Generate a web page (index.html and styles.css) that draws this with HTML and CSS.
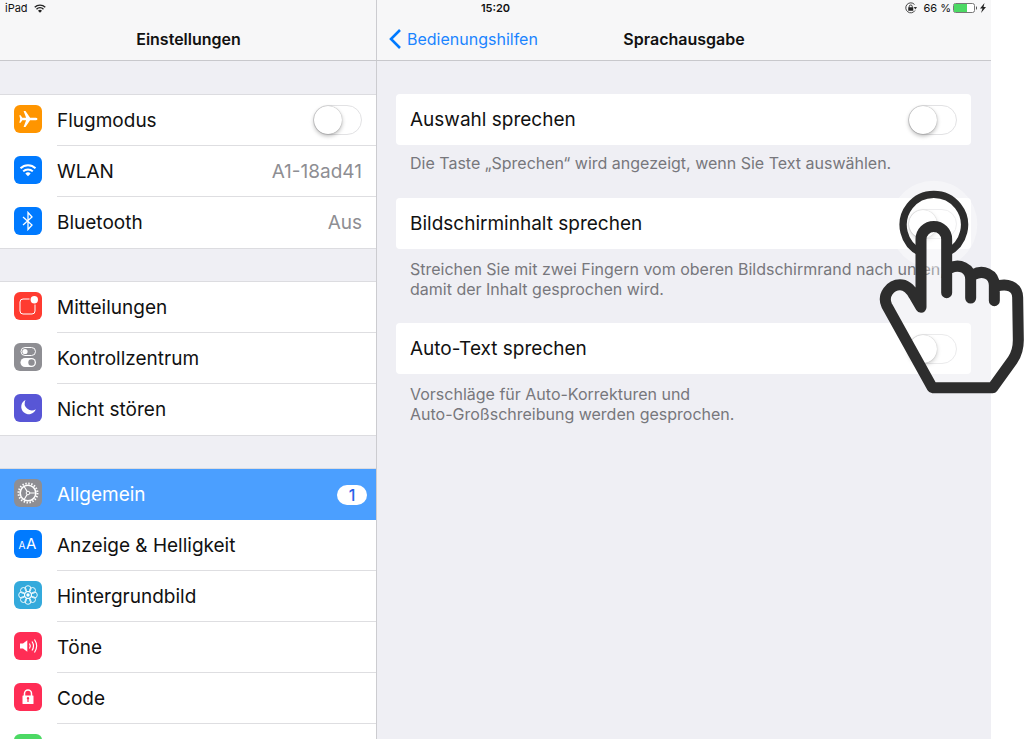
FILE: index.html
```html
<!DOCTYPE html>
<html lang="de">
<head>
<meta charset="utf-8">
<title>Einstellungen – Sprachausgabe</title>
<meta name="viewport" content="width=device-width, initial-scale=1">
<link rel="stylesheet" href="styles.css">
</head>
<body>
<div class="stage">
  <div class="tablet">
    <header class="bar">
      <div class="status">
        <span class="status-left">iPad
          <svg class="status-wifi" viewBox="0 0 24 18" aria-hidden="true"><path d="M1.500 6.500a15 15 0 0 1 21 0M5 10.500a10 10 0 0 1 14 0" fill="none" stroke="#222" stroke-width="2.800"/><path d="M8 13.500a6 6 0 0 1 8 0l-4 4z" fill="#222"/></svg>
        </span>
        <span class="status-time">15:20</span>
        <span class="status-right">
          <svg class="status-lock" viewBox="0 0 24 24" aria-hidden="true"><path d="M19 5A10 10 0 1 0 20 17" fill="none" stroke="#333" stroke-width="1.800"/><path d="M17.500 10h6.500l-3.200 5z" fill="#333"/><rect x="6.500" y="10.500" width="10" height="7" fill="#222"/><path d="M8.500 11V9a3 3 0 0 1 6 0v2" fill="none" stroke="#222" stroke-width="1.800"/></svg>
          <span>66 %</span>
          <svg class="status-battery" viewBox="0 0 25 10" aria-hidden="true"><rect x=".5" y=".5" width="21" height="9" rx="2" fill="#fff" stroke="#777"/><path d="M1 1h13v8H1z" fill="#4cd964"/><path d="M23 3q2 2 0 4z" fill="#444"/></svg>
          <svg class="status-bolt" viewBox="0 0 6 10" aria-hidden="true"><path d="M4.500 0 0 5.500h2.500L1 10l5-6H3.500z" fill="#222"/></svg>
        </span>
      </div>
      <div class="titles">
        <h1 class="title">Einstellungen</h1>
        <div class="detail-title">
          <a class="back" href="#bedienungshilfen"><svg class="chevron" viewBox="0 0 12 20" aria-hidden="true"><path d="M11 1 2 10l9 9" fill="none" stroke="#007aff" stroke-width="2.600"/></svg>Bedienungshilfen</a>
          <h2 class="title">Sprachausgabe</h2>
        </div>
      </div>
    </header>

    <nav class="sidebar">
      <ul class="group">
        <li class="row">
          <svg class="icon orange" viewBox="0 0 28 28" aria-hidden="true"><path d="M23.500 14c0-.8-1.200-1.300-2.400-1.300h-5L11.500 6H9.600l2.500 6.700H8.300L6.600 10.300H5.300l.9 3.700-.9 3.700h1.300l1.700-2.400h3.800L9.600 22h1.900l4.600-6.700h5c1.200 0 2.400-.5 2.400-1.300z" fill="#fff"/></svg>
          <div class="body"><label for="flug">Flugmodus</label><input class="switch" type="checkbox" id="flug"></div>
        </li>
        <li><a class="row" href="#wlan">
          <svg class="icon blue" viewBox="0 0 28 28" aria-hidden="true"><path d="M6.500 12.300a10.600 10.600 0 0 1 15 0M9.200 15.400a6.800 6.800 0 0 1 9.600 0" fill="none" stroke="#fff" stroke-width="2"/><path d="M11.300 17.400a4 4 0 0 1 5.400 0L14 20.300z" fill="#fff"/></svg>
          <span class="body">WLAN<span class="value">A1-18ad41</span></span></a></li>
        <li><a class="row" href="#bluetooth">
          <svg class="icon blue" viewBox="0 0 28 28" aria-hidden="true"><path d="m9 10 9 8-4 4.500v-17l4 4.500-9 8" fill="none" stroke="#fff" stroke-width="1.300"/></svg>
          <span class="body">Bluetooth<span class="value">Aus</span></span></a></li>
      </ul>

      <ul class="group">
        <li><a class="row" href="#mitteilungen">
          <svg class="icon red" viewBox="0 0 28 28" aria-hidden="true"><path d="M15.500 7H9a3 3 0 0 0-3 3v9a3 3 0 0 0 3 3h9a3 3 0 0 0 3-3v-6.500" fill="none" stroke="#fff" stroke-width="1"/><circle cx="20.300" cy="7.800" r="3.700" fill="#fff"/></svg>
          <span class="body">Mitteilungen</span></a></li>
        <li><a class="row" href="#kontrollzentrum">
          <svg class="icon gray" viewBox="0 0 28 28" aria-hidden="true"><rect x="7" y="4.500" width="14.500" height="8" rx="4" fill="none" stroke="#fff"/><circle cx="11" cy="8.500" r="2.600" fill="#fff"/><rect x="6.500" y="15" width="15.500" height="9" rx="4.500" fill="#fff"/><circle cx="17.500" cy="19.500" r="3.200" fill="#8e8e93"/></svg>
          <span class="body">Kontrollzentrum</span></a></li>
        <li><a class="row" href="#nicht-stoeren">
          <svg class="icon purple" viewBox="0 0 28 28" aria-hidden="true"><path d="M11.500 6a7.500 7.500 0 1 0 10.300 9.300A7.200 7.200 0 0 1 11.500 6z" fill="#fff"/></svg>
          <span class="body">Nicht stören</span></a></li>
      </ul>

      <ul class="group">
        <li><a class="row selected" href="#allgemein" aria-current="page">
          <svg class="icon gray" viewBox="0 0 28 28" aria-hidden="true"><g fill="none" stroke="#fff"><circle cx="14" cy="14" r="9.500" stroke-width="2" stroke-dasharray="1.400 1.584"/><circle cx="14" cy="14" r="7.800" stroke-width="1.600"/><circle cx="14" cy="14" r="1.800"/><path d="M15.800 14H22M13.100 12.400 10 7.200M13.100 15.600 10 20.800" stroke-width="1.100"/></g></svg>
          <span class="body">Allgemein<span class="badge">1</span></span></a></li>
        <li><a class="row" href="#anzeige">
          <svg class="icon blue" viewBox="0 0 28 28" aria-hidden="true"><g font-family="Inter, sans-serif" fill="#fff"><text x="4.500" y="19" font-size="10">A</text><text x="12" y="19" font-size="15">A</text></g></svg>
          <span class="body">Anzeige &amp; Helligkeit</span></a></li>
        <li><a class="row" href="#hintergrundbild">
          <svg class="icon cyan" viewBox="0 0 28 28" aria-hidden="true"><g fill="none" stroke="#fff" stroke-width=".9"><circle cx="14" cy="7.700" r="3"/><circle cx="18.500" cy="9.500" r="3"/><circle cx="20.300" cy="14" r="3"/><circle cx="18.500" cy="18.500" r="3"/><circle cx="14" cy="20.300" r="3"/><circle cx="9.500" cy="18.500" r="3"/><circle cx="7.700" cy="14" r="3"/><circle cx="9.500" cy="9.500" r="3"/><circle cx="14" cy="14" r="3.500"/></g><circle cx="14" cy="14" r="1.700" fill="#fff"/></svg>
          <span class="body">Hintergrundbild</span></a></li>
        <li><a class="row" href="#toene">
          <svg class="icon pink" viewBox="0 0 28 28" aria-hidden="true"><path d="M6 11.500h3l4.300-3.300v11.600L9 16.500H6z" fill="#fff"/><path d="M15.500 11.500q1.600 2.500 0 5M18 9.500q3 4.500 0 9M20.500 7.500q4.300 6.500 0 13" fill="none" stroke="#fff" stroke-width="1.200"/></svg>
          <span class="body">Töne</span></a></li>
        <li><a class="row" href="#code">
          <svg class="icon pink" viewBox="0 0 28 28" aria-hidden="true"><path d="M10.500 13V10.500a3.500 3.500 0 0 1 7 0V13" fill="none" stroke="#fff" stroke-width="1.500"/><rect x="8.500" y="12.500" width="11" height="8.500" rx=".5" fill="#fff"/><path d="M14 14a1.300 1.300 0 0 1 .6 2.400V19h-1.200v-2.600A1.300 1.300 0 0 1 14 14z" fill="#ff2d55"/></svg>
          <span class="body">Code</span></a></li>
        <li><a class="row" href="#batterie" aria-label="Batterie">
          <svg class="icon green" viewBox="0 0 28 28" aria-hidden="true"><rect x="5" y="10" width="16" height="8" rx="1" fill="#fff"/></svg>
          <span class="body"></span></a></li>
      </ul>
    </nav>

    <main class="detail">
      <div class="card"><label for="auswahl">Auswahl sprechen</label><input class="switch" type="checkbox" id="auswahl"></div>
      <p class="hint">Die Taste „Sprechen“ wird angezeigt, wenn Sie Text auswählen.</p>
      <div class="card"><label for="inhalt">Bildschirminhalt sprechen</label><input class="switch" type="checkbox" id="inhalt"></div>
      <p class="hint long">Streichen Sie mit zwei Fingern vom oberen Bildschirmrand nach unten,<br>damit der Inhalt gesprochen wird.</p>
      <div class="card"><label for="autotext">Auto-Text sprechen</label><input class="switch" type="checkbox" id="autotext"></div>
      <p class="hint long">Vorschläge für Auto-Korrekturen und<br>Auto-Großschreibung werden gesprochen.</p>
    </main>
  </div>

  <svg class="hand" viewBox="0 0 462 660" aria-hidden="true">
    <circle cx="191" cy="133" r="131" fill="#fff" fill-opacity=".4"/>
    <path d="M153 178a38.500 38.500 0 0 1 77 0v92C262 245 298 262 302 290 336 264 370 280 373 318 410 304 442 318 443 352L445 480Q445 515 430 540L368 623H190L50 376C32 345 62 314 90 314Q115 314 132 346L153 382z" fill="#fff" fill-opacity=".3"/>
    <g fill="none" stroke="#2d2d2d" stroke-linecap="round" stroke-linejoin="round">
      <path d="M153 218.600a92 92 0 1 1 77 0" stroke-width="22" stroke-linecap="butt"/>
      <path stroke-width="33" d="M230 338V178a38.500 38.500 0 0 0-77 0V382L132 346Q115 314 90 314C62 314 36 345 50 376L187 623H368L428 540Q445 515 445 480L443 352C442 318 410 308 376 320M240 264C268 250 302 264 302 298V354M310 284C338 268 373 282 373 316V362"/>
    </g>
  </svg>
</div>
</body>
</html>
```
FILE: styles.css
```css
* { box-sizing: border-box; }

body {
  margin: 0;
  background: #fff;
  color: #111;
  font-family: Inter, "Liberation Sans", sans-serif;
  font-size: 19px;
}

h1, h2, p, ul { margin: 0; padding: 0; }
ul { list-style: none; }
a { color: inherit; text-decoration: none; }
svg { display: block; flex: none; }

.stage {
  position: relative;
  height: 100vh;
  padding-right: 33px;
  overflow: hidden;
}

.tablet {
  display: grid;
  grid-template-columns: 377px 1fr;
  grid-template-rows: auto 1fr;
  height: 100%;
  background: #efeff4;
}

/* Status and title bar */
.bar {
  grid-column: 1 / -1;
  background: linear-gradient(to right, #f7f7f8 376px, #ccccd0 376px, #ccccd0 377px, #f7f7f8 377px);
  border-bottom: 1px solid #c8c8cc;
}
.status {
  display: grid;
  grid-template-columns: 1fr auto 1fr;
  align-items: center;
  height: 16px;
  padding: 0 5px;
  font-size: 11px;
  line-height: 16px;
}
.status-left, .status-right { display: flex; align-items: center; gap: 6px; }
.status-right { justify-content: flex-end; gap: 2px; font-size: 11px; }
.status-time { font-weight: 600; }
.status-wifi { width: 12px; height: 9px; }
.status-lock { width: 12px; height: 12px; margin-right: 4px; }
.status-battery { width: 25px; height: 10px; }
.status-bolt { width: 6px; height: 10px; }

.titles {
  display: grid;
  grid-template-columns: 377px 1fr;
  align-items: center;
  height: 44px;
  padding-top: 2px;
  font-size: 16px;
}
.title { font-size: 16px; font-weight: 600; text-align: center; }
.detail-title {
  display: grid;
  grid-template-columns: 1fr auto 1fr;
  align-items: center;
  padding: 0 12px;
}
.back { display: flex; align-items: center; gap: 6px; color: #1a84ff; }
.chevron { width: 12px; height: 20px; }

/* Settings list */
.sidebar {
  display: flex;
  flex-direction: column;
  gap: 32px;
  min-height: 0;
  padding-top: 33px;
  overflow: hidden;
  border-right: 1px solid #ccccd0;
}
.group {
  flex: none;
  background: #fff;
  border-top: 1px solid #dcdce0;
}
.row {
  display: flex;
  align-items: center;
  gap: 15px;
  height: 51px;
  padding-left: 14px;
}
.body {
  display: flex;
  flex: 1;
  align-items: center;
  justify-content: space-between;
  height: 100%;
  padding-right: 14px;
  border-bottom: 1px solid #dedee1;
}
.group li:last-child { border-bottom: 1px solid #dcdce0; }
.group li:last-child .body { border-bottom: 0; }
.value { color: #8e8e93; }
.selected { background: #4b9fff; color: #fff; }
.selected .body { padding-right: 9px; border-bottom: 0; }
.badge {
  width: 30px;
  border-radius: 10px;
  background: #fff;
  color: #2962e8;
  font-size: 16px;
  font-weight: 500;
  line-height: 20px;
  text-align: center;
}

.icon { width: 28px; height: 28px; margin-bottom: 4px; border-radius: 6px; }
.orange { background: #ff9500; }
.blue { background: #007aff; }
.red { background: #ff3b30; }
.gray { background: #8e8e93; }
.purple { background: #5856d6; }
.cyan { background: #34aadc; }
.pink { background: #ff2d55; }
.green { background: #4cd964; }

/* Switch */
.switch {
  display: flex;
  flex: none;
  width: 49px;
  height: 30px;
  margin: 0;
  appearance: none;
  border: 1px solid #e2e2e4;
  border-radius: 15px;
  background: #fff;
}
.switch::before {
  content: "";
  width: 28px;
  height: 28px;
  border-radius: 50%;
  background: #fff;
  box-shadow: 0 2px 4px rgba(0, 0, 0, .28), 0 0 1px rgba(0, 0, 0, .4);
}
.switch:checked { justify-content: flex-end; background: #4cd964; }

/* Detail pane */
.detail { padding: 33px 20px 0 19px; }
.card {
  display: flex;
  align-items: center;
  justify-content: space-between;
  height: 51px;
  padding: 0 14px;
  border-radius: 4px;
  background: #fff;
}
.hint {
  padding: 8px 14px 25px;
  color: #77777c;
  font-size: 16px;
  line-height: 20px;
}
.long { padding-top: 10px; padding-bottom: 24px; }

/* Tapping hand over the page */
.hand {
  position: absolute;
  top: 180px;
  right: 0;
  width: 154px;
  height: 220px;
  pointer-events: none;
}
```
